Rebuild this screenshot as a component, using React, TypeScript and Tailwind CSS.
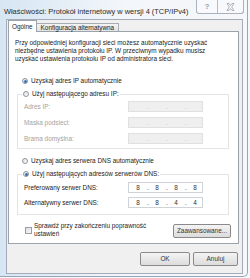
/**
 * Właściwości: Protokół internetowy w wersji 4 (TCP/IPv4)
 * Okno dialogowe Windows 7, pomniejszone.
 */

function Radio({ checked = false }: { checked?: boolean }) {
  return (
    <span className="flex h-[6px] w-[6px] shrink-0 items-center justify-center rounded-full border border-[#8f959c] bg-linear-to-br from-[#e2e4e7] to-[#fbfbfb]">
      {checked && <span className="h-[3px] w-[3px] rounded-full bg-[#3a6fb8]" />}
    </span>
  );
}

function IpField({ values, disabled = false }: { values?: string[]; disabled?: boolean }) {
  const parts = values ?? ["", "", "", ""];
  return (
    <div
      className={
        disabled
          ? "flex h-[11px] w-[75px] items-center border border-[#e0e0e0] bg-[#efefef] text-[#b5b5b5]"
          : "flex h-[11px] w-[75px] items-center border border-[#cfd3d8] bg-white text-[#333]"
      }
    >
      {parts.map((v, i) => (
        <div key={i} className="flex items-center">
          <span className="w-[18px] text-center">{v}</span>
          {i < 3 && <span className="w-[1px] text-center">.</span>}
        </div>
      ))}
    </div>
  );
}

function Button({ label, width }: { label: string; width: string }) {
  return (
    <div
      className={`${width} flex h-[14px] items-center justify-center rounded-[2px] border border-[#8a8a8a] bg-linear-to-b from-[#f4f4f4] to-[#dcdcdc] text-[#333]`}
    >
      {label}
    </div>
  );
}

export default function App() {
  return (
    <div className="h-[278px] w-[250px] overflow-hidden bg-[#f4f7fb] font-['Liberation_Sans',Arial,sans-serif] text-[6.4px] text-[#222]">
      {/* ramka okna */}
      <div className="h-[277px] w-[248px] rounded-br-[5px] border-r border-b border-[#9aa6b6] bg-linear-to-r from-[#d6e6f3] via-[#f3f6fa] to-[#f5f7fa]">
        {/* pasek tytułu */}
        <div className="flex h-[19px]">
          <div className="pt-[6px] pl-[4px] text-[7.4px] whitespace-nowrap text-[#2a2a2a]">
            Właściwości: Protokół internetowy w wersji 4 (TCP/IPv4)
          </div>
          <div className="ml-auto mr-[3px] flex h-[14px] rounded-b-[3px] border border-t-0 border-[#a9b3c0] bg-[#f7f9fc]">
            <div className="flex w-[21px] items-center justify-center border-r border-[#b4bdc8] text-[8px] font-bold text-[#9aa0a8]">
              ?
            </div>
            <div className="flex w-[25px] items-center justify-center">
              <svg width="9" height="8" viewBox="0 0 9 8">
                <path
                  d="M1 0.5 L3 0.5 L4.5 2.5 L6 0.5 L8 0.5 L5.7 4 L8 7.5 L6 7.5 L4.5 5.5 L3 7.5 L1 7.5 L3.3 4 Z"
                  fill="#fbfbfb"
                  stroke="#9aa0a8"
                  strokeWidth="0.8"
                />
              </svg>
            </div>
          </div>
        </div>

        {/* obszar klienta */}
        <div className="ml-[6px] h-[255px] w-[237px] border border-[#a3acb8] bg-[#f0f0f0]">
          {/* zakładki */}
          <div className="relative z-10 ml-[1px] flex h-[11px] items-end">
            <div className="mb-[-1px] flex h-[12px] items-center border border-b-0 border-[#9ca3ab] bg-white px-[3px]">
              Ogólne
            </div>
            <div className="flex h-[8px] items-center border border-l-0 border-b-0 border-[#a7adb4] bg-linear-to-b from-[#f3f3f3] to-[#e3e3e3] px-[4px]">
              Konfiguracja alternatywna
            </div>
          </div>

          {/* panel zakładki */}
          <div className="ml-[1px] h-[213px] w-[231px] border border-[#9ca3ab] bg-white">
            <p className="mt-[7px] ml-[6px] leading-[8px] whitespace-nowrap">
              Przy odpowiedniej konfiguracji sieci możesz automatycznie uzyskać
              <br />
              niezbędne ustawienia protokołu IP. W przeciwnym wypadku musisz
              <br />
              uzyskać ustawienia protokołu IP od administratora sieci.
            </p>

            <div className="mt-[14px] ml-[13px] flex h-[8px] items-center gap-[3px]">
              <Radio checked />
              <span>Uzyskaj adres IP automatycznie</span>
            </div>

            <fieldset className="mt-[5px] ml-[8px] w-[212px] border border-[#e2e4e7] pt-[3px] pr-0 pb-[4px] pl-[4px]">
              <legend className="flex h-[8px] items-center gap-[3px] px-[1px]">
                <Radio />
                <span>Użyj następującego adresu IP:</span>
              </legend>
              <div className="flex flex-col gap-[5px] text-[#a3a3a3]">
                <div className="flex h-[11px] items-center">
                  <span className="ml-[2px] w-[104px]">Adres IP:</span>
                  <IpField disabled />
                </div>
                <div className="flex h-[11px] items-center">
                  <span className="ml-[2px] w-[104px]">Maska podsieci:</span>
                  <IpField disabled />
                </div>
                <div className="flex h-[11px] items-center">
                  <span className="ml-[2px] w-[104px]">Brama domyślna:</span>
                  <IpField disabled />
                </div>
              </div>
            </fieldset>

            <div className="mt-[8px] ml-[13px] flex h-[8px] items-center gap-[3px]">
              <Radio />
              <span>Uzyskaj adres serwera DNS automatycznie</span>
            </div>

            <fieldset className="mt-[5px] ml-[8px] w-[212px] border border-[#e2e4e7] pt-[4px] pr-0 pb-[6px] pl-[4px]">
              <legend className="flex h-[8px] items-center gap-[3px] px-[1px]">
                <Radio checked />
                <span>Użyj następujących adresów serwerów DNS:</span>
              </legend>
              <div className="flex flex-col gap-[4px]">
                <div className="flex h-[11px] items-center">
                  <span className="ml-[2px] w-[104px]">Preferowany serwer DNS:</span>
                  <IpField values={["8", "8", "8", "8"]} />
                </div>
                <div className="flex h-[11px] items-center">
                  <span className="ml-[2px] w-[104px]">Alternatywny serwer DNS:</span>
                  <IpField values={["8", "8", "4", "4"]} />
                </div>
              </div>
            </fieldset>

            <div className="mt-[7px] flex items-start">
              <span className="mt-[5px] ml-[16px] h-[7px] w-[7px] shrink-0 border border-[#9a9fa6] bg-linear-to-br from-[#dcdfe3] to-[#f7f7f7]" />
              <span className="ml-[2px] leading-[8px]">
                Sprawdź przy zakończeniu poprawność
                <br />
                ustawień
              </span>
              <div className="mt-[2px] mr-[7px] ml-auto">
                <Button label="Zaawansowane..." width="w-[58px]" />
              </div>
            </div>
          </div>

          {/* przyciski */}
          <div className="mt-[8px] flex justify-end gap-[3px] pr-[4px]">
            <Button label="OK" width="w-[50px]" />
            <Button label="Anuluj" width="w-[45px]" />
          </div>
        </div>
      </div>
    </div>
  );
}
